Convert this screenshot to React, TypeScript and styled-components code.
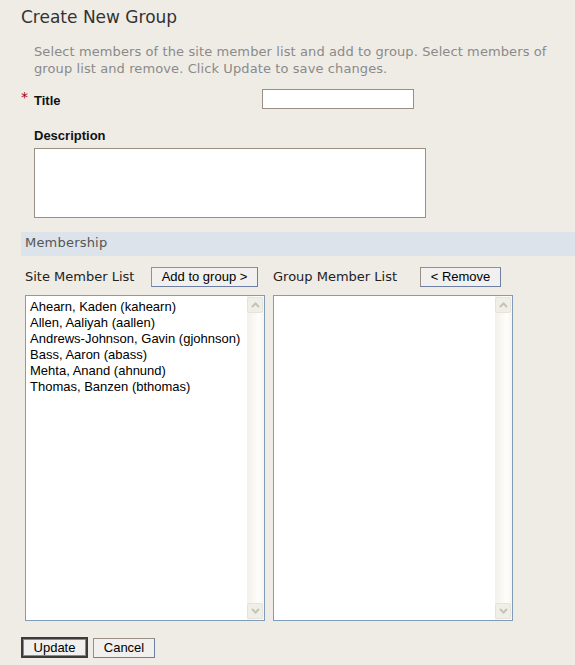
import React from "react";
import styled, { createGlobalStyle } from "styled-components";

const GlobalStyle = createGlobalStyle`
  html, body {
    margin: 0;
    padding: 0;
    background: #efece6;
  }
  body {
    font-family: "DejaVu Sans", Verdana, sans-serif;
    width: 575px;
    height: 665px;
    overflow: hidden;
  }
`;

const Page = styled.div`
  padding: 7px 0 0 21px;
  box-sizing: border-box;
  width: 575px;
  height: 665px;
`;

const Heading = styled.h2`
  margin: 0;
  font-family: "DejaVu Sans", Verdana, sans-serif;
  font-weight: normal;
  font-size: 17px;
  line-height: 20px;
  color: #333333;
`;

const Intro = styled.p`
  margin: 16px 0 0 13px;
  width: 530px;
  font-size: 13px;
  line-height: 17px;
  letter-spacing: 0.1px;
  color: #8a8a8a;
`;

const FieldRow = styled.div`
  display: flex;
  align-items: flex-start;
  margin-top: 12px;
`;

const Required = styled.span`
  width: 13px;
  font-family: "DejaVu Sans", Verdana, sans-serif;
  font-size: 14px;
  line-height: 14px;
  color: #a00000;
  padding-top: 1px;
`;

const Label = styled.label<{ $width?: number }>`
  display: block;
  ${(p) => (p.$width ? `width: ${p.$width}px;` : "")}
  font-family: "Liberation Sans", Arial, sans-serif;
  font-weight: bold;
  font-size: 13px;
  line-height: 16px;
  color: #111111;
  padding-top: 4px;
`;

const TextInput = styled.input`
  box-sizing: border-box;
  width: 152px;
  height: 20px;
  margin: 0;
  border: 1px solid #9a8f85;
  background: #ffffff;
  padding: 1px 3px;
  font-family: "Liberation Sans", Arial, sans-serif;
  font-size: 13px;
`;

const DescBlock = styled.div`
  margin: 15px 0 0 13px;
  display: flex;
  flex-direction: column;
  gap: 4px;
`;

const TextArea = styled.textarea`
  box-sizing: border-box;
  width: 392px;
  height: 70px;
  margin: 0;
  border: 1px solid #9a8f85;
  background: #ffffff;
  resize: none;
  padding: 2px;
  display: block;
`;

const SectionBar = styled.div`
  margin-top: 14px;
  height: 24px;
  background: #dce3ea;
  padding-left: 4px;
  font-size: 13px;
  line-height: 22px;
  letter-spacing: 0.2px;
  color: #555555;
`;

const Lists = styled.div`
  display: flex;
  gap: 8px;
  margin: 11px 0 0 4px;
`;

const ListColumn = styled.div`
  display: flex;
  flex-direction: column;
  gap: 8px;
  width: 240px;
`;

const ListHeader = styled.div`
  display: flex;
  align-items: center;
  height: 20px;
`;

const ListLabel = styled.span<{ $width: number }>`
  width: ${(p) => p.$width}px;
  font-size: 13px;
  line-height: 20px;
  color: #222222;
`;

const Button = styled.button<{ $w: number; $h?: number; $default?: boolean }>`
  box-sizing: border-box;
  width: ${(p) => p.$w}px;
  height: ${(p) => p.$h ?? 20}px;
  margin: 0;
  padding: 0;
  background: #f1f0ee;
  font-family: "Liberation Sans", Arial, sans-serif;
  font-size: 13px;
  line-height: 16px;
  color: #000000;
  border: 1px solid;
  border-color: #9a8f85 #6d7fa2 #6d7fa2 #9a8f85;
  ${(p) =>
    p.$default
      ? `border: 2px solid #3c3c3c; box-shadow: inset 0 0 0 1px #8f8a84;`
      : ""}
`;

const ListBox = styled.div`
  box-sizing: border-box;
  height: 326px;
  border: 1px solid #7f9db9;
  background: #ffffff;
  display: flex;
`;

const ListItems = styled.ul`
  flex: 1;
  margin: 0;
  padding: 3px 4px;
  list-style: none;
`;

const ListItem = styled.li`
  font-family: "Liberation Sans", Arial, sans-serif;
  font-size: 13px;
  line-height: 16px;
  color: #000000;
  white-space: nowrap;
`;

const ScrollBar = styled.div`
  width: 17px;
  box-sizing: border-box;
  padding: 1px 1px 1px 0;
  display: flex;
  flex-direction: column;
  background: linear-gradient(to right, #f3f1ea, #fdfdfb 70%, #f6f5f0);
`;

const ScrollTrack = styled.div`
  flex: 1;
`;

const ScrollButton = styled.div`
  box-sizing: border-box;
  width: 16px;
  height: 16px;
  border: 1px solid #e6e4da;
  border-radius: 2px;
  background: #efeee7;
  display: flex;
  align-items: center;
  justify-content: center;
`;

const Actions = styled.div`
  display: flex;
  align-items: center;
  gap: 5px;
  margin-top: 16px;
`;

const Chevron = ({ up }: { up?: boolean }) => (
  <svg width="9" height="6" viewBox="0 0 9 6">
    <path
      d={up ? "M1 5 L4.5 1.5 L8 5" : "M1 1 L4.5 4.5 L8 1"}
      fill="none"
      stroke="#c6c4b6"
      strokeWidth="2"
    />
  </svg>
);

const Scroller = () => (
  <ScrollBar>
    <ScrollButton>
      <Chevron up />
    </ScrollButton>
    <ScrollTrack />
    <ScrollButton>
      <Chevron />
    </ScrollButton>
  </ScrollBar>
);

const members = [
  "Ahearn, Kaden (kahearn)",
  "Allen, Aaliyah (aallen)",
  "Andrews-Johnson, Gavin (gjohnson)",
  "Bass, Aaron (abass)",
  "Mehta, Anand (ahnund)",
  "Thomas, Banzen (bthomas)",
];

export default function App() {
  return (
    <>
      <GlobalStyle />
      <Page>
        <Heading>Create New Group</Heading>
        <Intro>
          Select members of the site member list and add to group. Select
          members of group list and remove. Click Update to save changes.
        </Intro>
        <FieldRow>
          <Required>*</Required>
          <Label $width={228}>Title</Label>
          <TextInput type="text" />
        </FieldRow>
        <DescBlock>
          <Label>Description</Label>
          <TextArea />
        </DescBlock>
        <SectionBar>Membership</SectionBar>
        <Lists>
          <ListColumn>
            <ListHeader>
              <ListLabel $width={126}>Site Member List</ListLabel>
              <Button $w={107}>Add to group &gt;</Button>
            </ListHeader>
            <ListBox>
              <ListItems>
                {members.map((m) => (
                  <ListItem key={m}>{m}</ListItem>
                ))}
              </ListItems>
              <Scroller />
            </ListBox>
          </ListColumn>
          <ListColumn>
            <ListHeader>
              <ListLabel $width={147}>Group Member List</ListLabel>
              <Button $w={81}>&lt; Remove</Button>
            </ListHeader>
            <ListBox>
              <ListItems />
              <Scroller />
            </ListBox>
          </ListColumn>
        </Lists>
        <Actions>
          <Button $w={67} $h={21} $default>
            Update
          </Button>
          <Button $w={62}>Cancel</Button>
        </Actions>
      </Page>
    </>
  );
}
